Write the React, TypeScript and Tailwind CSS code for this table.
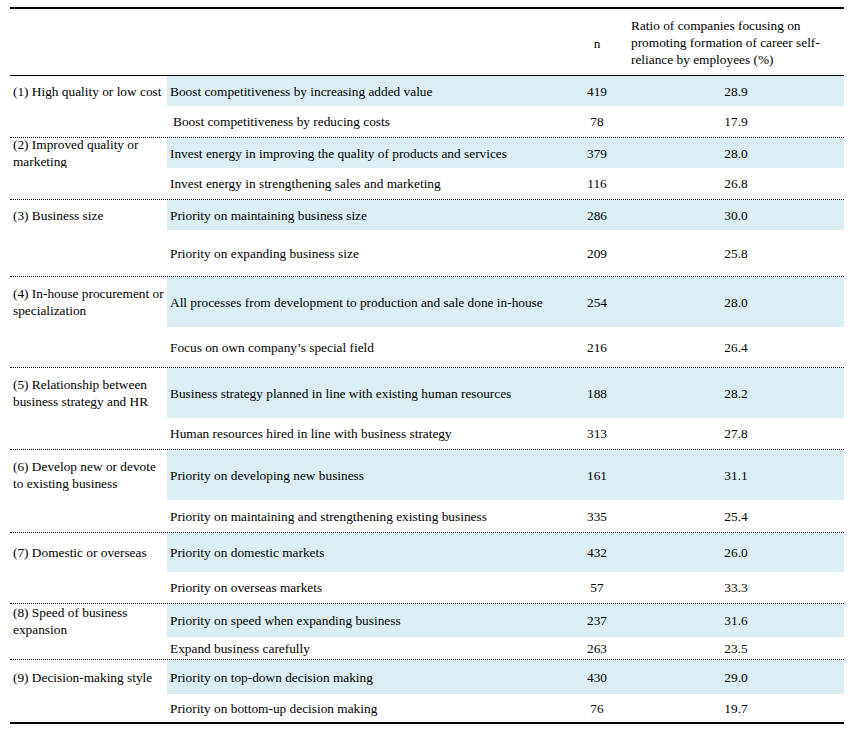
type Group = {
  label: string
  h1: string
  h2: string
  rows: [Row, Row]
}

type Row = {
  text: string
  n: number
  ratio: string
  indent?: boolean
}

const COLS = 'grid grid-cols-[157px_399px_62px_216px]'

const GROUPS: Group[] = [
  {
    label: '(1) High quality or low cost',
    h1: 'h-[30px]',
    h2: 'h-[31px]',
    rows: [
      { text: 'Boost competitiveness by increasing added value', n: 419, ratio: '28.9' },
      { text: 'Boost competitiveness by reducing costs', n: 78, ratio: '17.9', indent: true },
    ],
  },
  {
    label: '(2) Improved quality or marketing',
    h1: 'h-[30px]',
    h2: 'h-[31px]',
    rows: [
      { text: 'Invest energy in improving the quality of products and services', n: 379, ratio: '28.0' },
      { text: 'Invest energy in strengthening sales and marketing', n: 116, ratio: '26.8' },
    ],
  },
  {
    label: '(3) Business size',
    h1: 'h-[30px]',
    h2: 'h-[46px]',
    rows: [
      { text: 'Priority on maintaining business size', n: 286, ratio: '30.0' },
      { text: 'Priority on expanding business size', n: 209, ratio: '25.8' },
    ],
  },
  {
    label: '(4) In-house procurement or specialization',
    h1: 'h-[50px]',
    h2: 'h-[40px]',
    rows: [
      { text: 'All processes from development to production and sale done in-house', n: 254, ratio: '28.0' },
      { text: 'Focus on own company\u2019s special field', n: 216, ratio: '26.4' },
    ],
  },
  {
    label: '(5) Relationship between business strategy and HR',
    h1: 'h-[50px]',
    h2: 'h-[31px]',
    rows: [
      { text: 'Business strategy planned in line with existing human resources', n: 188, ratio: '28.2' },
      { text: 'Human resources hired in line with business strategy', n: 313, ratio: '27.8' },
    ],
  },
  {
    label: '(6) Develop new or devote to existing business',
    h1: 'h-[50px]',
    h2: 'h-[32px]',
    rows: [
      { text: 'Priority on developing new business', n: 161, ratio: '31.1' },
      { text: 'Priority on maintaining and strengthening existing business', n: 335, ratio: '25.4' },
    ],
  },
  {
    label: '(7) Domestic or overseas',
    h1: 'h-[39px]',
    h2: 'h-[31px]',
    rows: [
      { text: 'Priority on domestic markets', n: 432, ratio: '26.0' },
      { text: 'Priority on overseas markets', n: 57, ratio: '33.3' },
    ],
  },
  {
    label: '(8) Speed of business expansion',
    h1: 'h-[33px]',
    h2: 'h-[22px]',
    rows: [
      { text: 'Priority on speed when expanding business', n: 237, ratio: '31.6' },
      { text: 'Expand business carefully', n: 263, ratio: '23.5' },
    ],
  },
  {
    label: '(9) Decision-making style',
    h1: 'h-[34px]',
    h2: 'h-[28px]',
    rows: [
      { text: 'Priority on top-down decision making', n: 430, ratio: '29.0' },
      { text: 'Priority on bottom-up decision making', n: 76, ratio: '19.7' },
    ],
  },
]

function GroupRows({ group, last }: { group: Group; last: boolean }) {
  const [first, second] = group.rows
  return (
    <div className={last ? 'border-b-2 border-black' : 'border-b border-dotted border-black'}>
      {/* first row: shaded, label sits here and is clipped to it */}
      <div className={`${COLS} ${group.h1}`}>
        <div className="flex items-center overflow-hidden pl-[3px] pr-[2px]">{group.label}</div>
        <div className="flex items-center bg-[#daeef3] pl-[3px] whitespace-nowrap">{first.text}</div>
        <div className="flex items-center justify-center bg-[#daeef3]">{first.n}</div>
        <div className="flex items-center justify-center bg-[#daeef3]">{first.ratio}</div>
      </div>
      <div className={`${COLS} ${group.h2}`}>
        <div />
        <div className={`flex items-center whitespace-nowrap ${second.indent ? 'pl-[6px]' : 'pl-[3px]'}`}>
          {second.text}
        </div>
        <div className="flex items-center justify-center">{second.n}</div>
        <div className="flex items-center justify-center">{second.ratio}</div>
      </div>
    </div>
  )
}

export default function App() {
  return (
    <div className="min-h-[734px] bg-white px-[10px] pt-[7px] text-[13.33px] leading-[17px] text-black [font-family:'Liberation_Serif','Times_New_Roman',serif]">
      <div className="w-[834px]">
        {/* header */}
        <div className={`${COLS} h-[69px] border-t-2 border-b border-black`}>
          <div />
          <div />
          <div className="flex items-center justify-center pt-[2px]">n</div>
          <div className="flex items-center pl-[3px] pr-[3px]">
            Ratio of companies focusing on promoting formation of career self-reliance by employees (%)
          </div>
        </div>
        {GROUPS.map((g, i) => (
          <GroupRows key={g.label} group={g} last={i === GROUPS.length - 1} />
        ))}
      </div>
    </div>
  )
}
